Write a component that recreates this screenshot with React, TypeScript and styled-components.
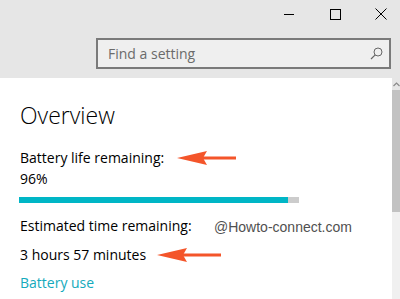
import styled, { createGlobalStyle } from 'styled-components';

const GlobalStyle = createGlobalStyle`
  html, body {
    margin: 0;
    padding: 0;
    background: #e6e6e6;
  }
  * {
    box-sizing: border-box;
  }
`;

const Window = styled.div`
  width: 400px;
  height: 299px;
  display: flex;
  flex-direction: column;
  overflow: hidden;
  font-family: 'Open Sans', 'Noto Sans', sans-serif;
  color: #000;
`;

const Header = styled.div`
  height: 78px;
  background: #e6e6e6;
  display: flex;
  flex-direction: column;
`;

const TitleBar = styled.div`
  height: 28px;
  display: flex;
  justify-content: flex-end;
  margin-right: -4px;
`;

const CaptionButton = styled.div`
  width: 46px;
  height: 28px;
  display: flex;
  align-items: center;
  justify-content: center;
`;

const SearchRow = styled.div`
  display: flex;
  padding: 10px 9px 0 96px;
`;

const SearchBox = styled.div`
  flex: 1;
  height: 31px;
  border: 2px solid #7a7a7a;
  background: #efefef;
  display: flex;
  align-items: center;
  justify-content: space-between;
  padding: 0 6px 0 10px;
`;

const Placeholder = styled.span`
  font-size: 14px;
  color: #6b6b6b;
`;

const Body = styled.div`
  flex: 1;
  display: flex;
  background: #fff;
`;

const Main = styled.div`
  position: relative;
  flex: 1;
  padding: 21px 0 0 20px;
`;

const Title = styled.h1`
  margin: 0 0 17px;
  font-size: 23px;
  font-weight: 300;
  line-height: 32px;
  color: #000;
`;

const Line = styled.div<{ $gap?: number }>`
  display: flex;
  align-items: center;
  font-size: 14px;
  line-height: 20px;
  height: 20px;
  margin-top: ${(p) => p.$gap ?? 0}px;
  color: #000;
`;

const Arrow = styled.svg<{ $left: number }>`
  margin-left: ${(p) => p.$left}px;
  flex-shrink: 0;
`;

const Track = styled.div`
  width: 280px;
  height: 6px;
  margin: 8px 0 0 -1px;
  background: #cccccc;
`;

const Fill = styled.div`
  height: 100%;
  background: #00b6c6;
`;

const Link = styled.div`
  margin-top: 8px;
  font-size: 14px;
  line-height: 20px;
  color: #14aabc;
`;

const Watermark = styled.span`
  position: absolute;
  left: 214px;
  top: 141px;
  font-family: 'Liberation Sans', Arial, sans-serif;
  font-size: 14px;
  color: #505050;
`;

const ScrollBar = styled.div`
  width: 8px;
  display: flex;
  flex-direction: column;
  background: #f0f0f0;
`;

const ScrollUp = styled.div`
  height: 12px;
  display: flex;
  align-items: center;
  justify-content: center;
  background: #e6e6e6;
`;

const Thumb = styled.div`
  height: 122px;
  background: #c2c2c2;
`;

const PointerArrow = ({ length, left }: { length: number; left: number }) => (
  <Arrow $left={left} width={length} height={16} viewBox={`0 0 ${length} 16`}>
    <polygon points="0,8 30,1 26,8 30,15" fill="#f4552a" />
    <rect x={26} y={6.5} width={length - 26} height={3} fill="#f4552a" />
  </Arrow>
);

const App = () => {
  const battery = 96;
  return (
    <Window>
      <GlobalStyle />
      <Header>
        <TitleBar>
          <CaptionButton>
            <svg width="11" height="11" viewBox="0 0 11 11">
              <rect x="0" y="5" width="10" height="1" fill="#000" />
            </svg>
          </CaptionButton>
          <CaptionButton>
            <svg width="11" height="11" viewBox="0 0 11 11">
              <rect x="0.5" y="0.5" width="10" height="10" fill="none" stroke="#000" />
            </svg>
          </CaptionButton>
          <CaptionButton>
            <svg width="12" height="12" viewBox="0 0 12 12">
              <path d="M0.5 0.5 L11.5 11.5 M11.5 0.5 L0.5 11.5" stroke="#000" strokeWidth="1" />
            </svg>
          </CaptionButton>
        </TitleBar>
        <SearchRow>
          <SearchBox>
            <Placeholder>Find a setting</Placeholder>
            <svg width="13" height="13" viewBox="0 0 13 13">
              <circle cx="8" cy="5" r="4" fill="none" stroke="#666" strokeWidth="1" />
              <path d="M5.2 7.8 L1 12" stroke="#666" strokeWidth="1.2" />
            </svg>
          </SearchBox>
        </SearchRow>
      </Header>
      <Body>
        <Main>
          <Title>Overview</Title>
          <Line>
            Battery life remaining:
            <PointerArrow length={59} left={13} />
          </Line>
          <Line $gap={1}>{battery}%</Line>
          <Track>
            <Fill style={{ width: `${battery}%` }} />
          </Track>
          <Line $gap={13}>Estimated time remaining:</Line>
          <Line $gap={9}>
            3 hours 57 minutes
            <PointerArrow length={64} left={11} />
          </Line>
          <Link>Battery use</Link>
          <Watermark>@Howto-connect.com</Watermark>
        </Main>
        <ScrollBar>
          <ScrollUp>
            <svg width="7" height="5" viewBox="0 0 7 5">
              <path d="M0.5 4 L3.5 1 L6.5 4" fill="none" stroke="#8a8a8a" strokeWidth="1.2" />
            </svg>
          </ScrollUp>
          <Thumb />
        </ScrollBar>
      </Body>
    </Window>
  );
};

export default App;
